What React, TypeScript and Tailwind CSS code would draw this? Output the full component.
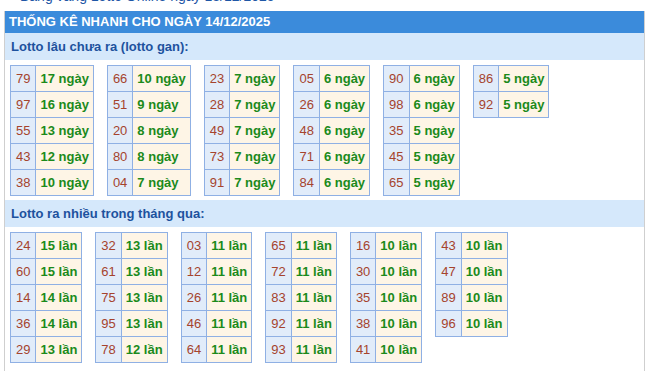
const ganTables = [
  [["79", "17 ngày"], ["97", "16 ngày"], ["55", "13 ngày"], ["43", "12 ngày"], ["38", "10 ngày"]],
  [["66", "10 ngày"], ["51", "9 ngày"], ["20", "8 ngày"], ["80", "8 ngày"], ["04", "7 ngày"]],
  [["23", "7 ngày"], ["28", "7 ngày"], ["49", "7 ngày"], ["73", "7 ngày"], ["91", "7 ngày"]],
  [["05", "6 ngày"], ["26", "6 ngày"], ["48", "6 ngày"], ["71", "6 ngày"], ["84", "6 ngày"]],
  [["90", "6 ngày"], ["98", "6 ngày"], ["35", "5 ngày"], ["45", "5 ngày"], ["65", "5 ngày"]],
  [["86", "5 ngày"], ["92", "5 ngày"]],
];

const hotTables = [
  [["24", "15 lần"], ["60", "15 lần"], ["14", "14 lần"], ["36", "14 lần"], ["29", "13 lần"]],
  [["32", "13 lần"], ["61", "13 lần"], ["75", "13 lần"], ["95", "13 lần"], ["78", "12 lần"]],
  [["03", "11 lần"], ["12", "11 lần"], ["26", "11 lần"], ["46", "11 lần"], ["64", "11 lần"]],
  [["65", "11 lần"], ["72", "11 lần"], ["83", "11 lần"], ["92", "11 lần"], ["93", "11 lần"]],
  [["16", "10 lần"], ["30", "10 lần"], ["35", "10 lần"], ["38", "10 lần"], ["41", "10 lần"]],
  [["43", "10 lần"], ["47", "10 lần"], ["89", "10 lần"], ["96", "10 lần"]],
];

const LottoTable = ({ rows }: { rows: string[][] }) => (
  <table className="border-collapse text-[13px]">
    <tbody>
      {rows.map(([num, val], i) => (
        <tr key={i}>
          <td className="border border-[#8fb0e4] bg-[#e1ecfa] px-[5px] py-[4px] leading-[17px] text-center text-[#a5432d]">
            {num}
          </td>
          <td className="border border-[#8fb0e4] bg-[#fef5e6] px-[4px] py-[4px] leading-[17px] font-bold text-[#1b8a1b]">
            {val}
          </td>
        </tr>
      ))}
    </tbody>
  </table>
);

const SectionBar = ({ title }: { title: string }) => (
  <div className="h-[27px] flex items-center pl-[6px] bg-[#d5e8fb] text-[13px] font-bold text-[#1d529e]">
    {title}
  </div>
);

export default function App() {
  return (
    <div className="bg-white min-h-[371px] overflow-hidden font-['Liberation_Sans',Arial,sans-serif]">
      <div className="-mt-[12px] pl-[8px] flex items-center gap-[5px] leading-4 text-[14px] text-[#1f57a6]">
        <span className="text-[9px]">▶</span>
        <span>Bảng vàng Lotto Online ngày 13/12/2025</span>
      </div>

      <div className="mt-[7px] ml-[4px] w-[641px] border-x border-[#cfcfcf]">
        <div className="h-[22px] leading-[22px] pl-[4px] bg-[#3b8bdb] text-white text-[13px] font-bold">
          THỐNG KÊ NHANH CHO NGÀY 14/12/2025
        </div>

        <SectionBar title="Lotto lâu chưa ra (lotto gan):" />
        <div className="flex flex-wrap items-start gap-[13px] px-[5px] pt-[5px] pb-[4px]">
          {ganTables.map((rows, i) => (
            <LottoTable key={i} rows={rows} />
          ))}
        </div>

        <SectionBar title="Lotto ra nhiều trong tháng qua:" />
        <div className="flex flex-wrap items-start gap-[13px] px-[5px] pt-[5px] pb-[10px]">
          {hotTables.map((rows, i) => (
            <LottoTable key={i} rows={rows} />
          ))}
        </div>
      </div>
    </div>
  );
}
